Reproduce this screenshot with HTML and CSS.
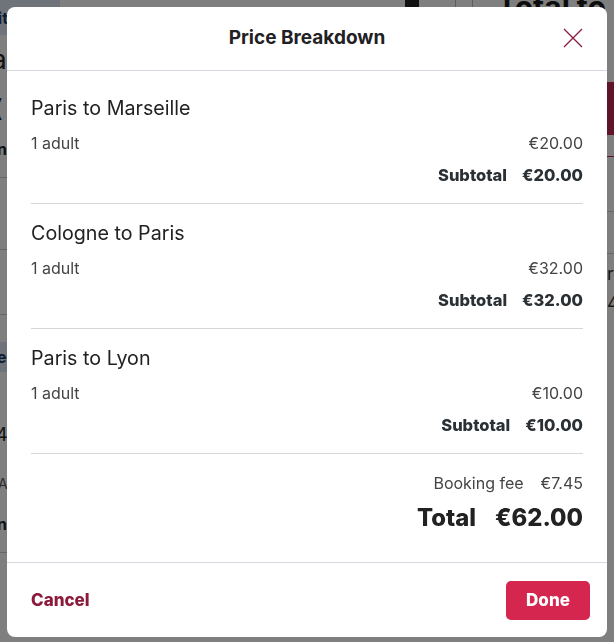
FILE: index.html
```html
<!DOCTYPE html>
<html lang="en">
<head>
<meta charset="utf-8">
<title>Price Breakdown</title>
<link rel="stylesheet" href="styles.css">
</head>
<body>
<div class="page">
  <div class="left-col">
    <div class="tag">Edit</div>
    <div class="left-big">a</div>
    <div class="left-mid">(</div>
    <div class="left-bold">n</div>
    <div class="left-rule r1"></div>
    <div class="left-rule r2"></div>
    <div class="left-rule r3"></div>
    <div class="tag2">e</div>
    <div class="left-num">4</div>
    <div class="left-small">Ad</div>
    <div class="left-bold b2">n</div>
    <div class="left-rule r4"></div>
  </div>
  <div class="mid-col">
    <div class="toolbar">
      <span class="trash"></span>
      <span class="vline"></span>
      <span class="vline"></span>
    </div>
  </div>
  <div class="right-col">
    <div class="total-head">Total to pay</div>
    <div class="red-bar">Continue</div>
    <div class="red-line"></div>
    <div class="right-rule"></div>
    <div class="right-rule rr2"></div>
    <div class="right-text">rs</div>
    <div class="right-text">4</div>
  </div>
</div>
<div class="overlay"></div>
<div class="modal" role="dialog" aria-labelledby="mtitle">
  <header class="modal-header">
    <span></span>
    <h1 id="mtitle" class="modal-title">Price Breakdown</h1>
    <button class="close" aria-label="Close">
      <svg width="20" height="20" viewBox="0 0 20 20"><path d="M1 1L19 19M19 1L1 19" stroke="#8b1a3b" stroke-width="1.3" fill="none"/></svg>
    </button>
  </header>
  <div class="modal-body">
    <section class="leg">
      <h2 class="leg-title">Paris to Marseille</h2>
      <div class="row"><span>1 adult</span><span>€20.00</span></div>
      <div class="subtotal"><span>Subtotal</span><span>€20.00</span></div>
    </section>
    <section class="leg">
      <h2 class="leg-title">Cologne to Paris</h2>
      <div class="row"><span>1 adult</span><span>€32.00</span></div>
      <div class="subtotal"><span>Subtotal</span><span>€32.00</span></div>
    </section>
    <section class="leg">
      <h2 class="leg-title">Paris to Lyon</h2>
      <div class="row"><span>1 adult</span><span>€10.00</span></div>
      <div class="subtotal"><span>Subtotal</span><span>€10.00</span></div>
    </section>
    <div class="summary">
      <div class="fee"><span>Booking fee</span><span>€7.45</span></div>
      <div class="total"><span>Total</span><span>€62.00</span></div>
    </div>
  </div>
  <footer class="modal-footer">
    <button class="cancel">Cancel</button>
    <button class="done">Done</button>
  </footer>
</div>
</body>
</html>
```
FILE: styles.css
```css
* { box-sizing: border-box; }
html, body { margin: 0; padding: 0; }
body {
  width: 614px;
  height: 642px;
  overflow: hidden;
  font-family: Inter, "Noto Sans", sans-serif;
  background: #fff;
}

/* background page */
.page {
  display: flex;
  height: 642px;
}
.left-col {
  width: 120px;
  display: flex;
  flex-direction: column;
  color: #222;
}
.tag {
  height: 35px;
  width: 60px;
  background: #dce8f3;
  color: #1f3b66;
  font-weight: 700;
  font-size: 16px;
  padding: 8px 0 0 0;
  text-indent: -22px;
  overflow: hidden;
}
.left-big {
  font-size: 26px;
  line-height: 30px;
  margin-top: 10px;
  text-indent: -8px;
}
.left-mid {
  font-size: 24px;
  line-height: 28px;
  margin-top: 20px;
  text-indent: -6px;
}
.left-bold {
  font-weight: 700;
  font-size: 16px;
  line-height: 20px;
  margin-top: 16px;
  text-indent: -3px;
}
.left-rule { height: 1px; background: #ccc; }
.r1 { margin-top: 18px; }
.r2 { margin-top: 71px; }
.r3 { margin-top: 64px; }
.tag2 {
  margin-top: 27px;
  height: 30px;
  width: 60px;
  background: #dce8f3;
  color: #1f3b66;
  font-weight: 700;
  padding-top: 5px;
  text-indent: -3px;
}
.left-num { margin-top: 52px; font-size: 18px; text-indent: -4px; }
.left-small { margin-top: 30px; font-size: 14px; color: #555; text-indent: -2px; }
.b2 { margin-top: 22px; }
.r4 { margin-top: 18px; }
.mid-col { flex: 1; }
.toolbar {
  display: flex;
  height: 30px;
  padding-left: 285px;
  gap: 36px;
}
.trash {
  width: 14px;
  height: 10px;
  background: #222;
  margin-top: -2px;
}
.vline { width: 1px; background: #bbb; height: 30px; }
.vline + .vline { margin-left: -20px; }
.right-col {
  width: 117px;
  display: flex;
  flex-direction: column;
}
.total-head {
  font-family: Inter, sans-serif;
  font-weight: 700;
  font-size: 30px;
  white-space: nowrap;
  color: #1b1b1b;
  line-height: 34px;
  margin-top: -10px;
}
.red-bar {
  margin-top: 58px;
  height: 53px;
  background: #c0294f;
  color: #fff;
  font-weight: 700;
  padding: 16px 0 0 12px;
}
.red-line { height: 1px; background: #c0294f; margin-top: 21px; }
.right-rule { height: 1px; background: #ccc; margin-top: 54px; }
.rr2 { margin-top: 41px; }
.right-text { font-size: 18px; line-height: 20px; margin-top: 10px; padding-left: 110px; color: #333; }

.overlay {
  position: fixed;
  inset: 0;
  background: rgba(0, 0, 0, 0.5);
}

/* modal */
.modal {
  position: fixed;
  top: 7px;
  left: 7px;
  width: 600px;
  height: 630px;
  background: #fff;
  border-radius: 8px;
  display: flex;
  flex-direction: column;
  color: #2b2b2b;
}
.modal-header {
  height: 64px;
  border-bottom: 1px solid #d3d9de;
  display: grid;
  grid-template-columns: 1fr auto 1fr;
  align-items: center;
  padding: 0 24px 2px;
}
.modal-title {
  margin: 0;
  font-family: Inter, "Noto Sans", sans-serif;
  font-weight: 700;
  font-size: 19px;
  color: #1f2124;
}
.close {
  justify-self: end;
  border: 0;
  background: none;
  padding: 0;
  width: 20px;
  height: 20px;
  display: flex;
}
.modal-body {
  flex: 1;
  padding: 25px 24px 0;
}
.leg {
  padding: 0 0 18px;
  border-bottom: 1px solid #d6d6d6;
}
.leg + .leg { padding-top: 17px; }
.leg-title {
  margin: 0;
  font-weight: 400;
  font-size: 19.7px;
  line-height: 24px;
  color: #222;
}
.row, .fee {
  display: flex;
  justify-content: space-between;
  font-size: 16px;
  line-height: 20px;
  color: #444;
  margin-top: 13px;
}
.subtotal, .total {
  display: flex;
  justify-content: flex-end;
  gap: 15px;
  font-weight: 800;
  font-size: 16.5px;
  line-height: 20px;
  color: #2a3034;
  margin-top: 12px;
}
.summary { padding-top: 19px; }
.fee {
  margin-top: 0;
  justify-content: flex-end;
  gap: 17px;
}
.total {
  font-size: 23.8px;
  line-height: 32px;
  margin-top: 9px;
  gap: 19px;
  color: #222;
}
.modal-footer {
  height: 75px;
  border-top: 1px solid #d3d9de;
  display: flex;
  align-items: center;
  justify-content: space-between;
  padding: 0 17px 0 24px;
}
.cancel {
  border: 0;
  background: none;
  padding: 0;
  font-family: Inter, sans-serif;
  font-weight: 800;
  font-size: 17px;
  color: #8b1a3b;
}
.done {
  width: 84px;
  height: 39px;
  border: 0;
  border-radius: 5px;
  background: #d4264f;
  color: #fff;
  font-family: Inter, sans-serif;
  font-weight: 800;
  font-size: 17px;
}
```
